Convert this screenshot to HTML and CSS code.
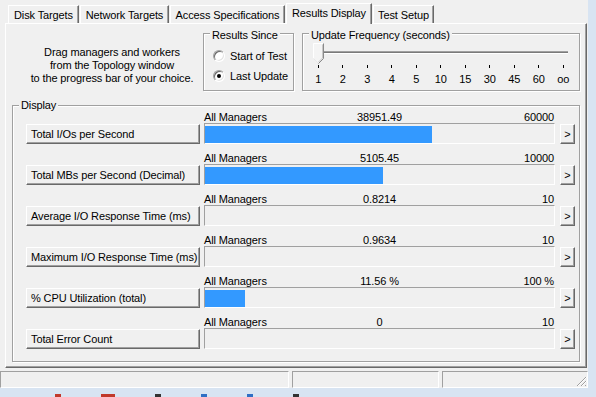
FILE: index.html
```html
<!DOCTYPE html>
<html lang="en">
    <head>
        <meta charset="UTF-8">
        <meta name="viewport" content="width=device-width, initial-scale=1.0">
        <title>Iometer - Results Display</title>
        <link rel="stylesheet" href="styles.css">
    </head>
    <body>
        <div class="window">
            <div class="tabs">
                <div class="tab tab-disk">Disk Targets</div>
                <div class="tab tab-net">Network Targets</div>
                <div class="tab tab-access">Access Specifications</div>
                <div class="tab tab-results active">Results Display</div>
                <div class="tab tab-setup">Test Setup</div>
            </div>

            <div class="panel">
                <div class="top-row">
                    <p class="hint">Drag managers and workers<br>from the Topology window<br>to the progress bar of your choice.</p>

                    <div class="group since">
                        <div class="group-title">Results Since</div>
                        <div class="radios">
                            <div class="radio-row"><span class="radio"></span>Start of Test</div>
                            <div class="radio-row"><span class="radio checked"></span>Last Update</div>
                        </div>
                    </div>

                    <div class="group freq">
                        <div class="group-title">Update Frequency (seconds)</div>
                        <div class="slider">
                            <div class="track"></div>
                            <svg class="thumb" width="11" height="21" viewBox="0 0 11 21">
                                <path d="M0.5 0.5 H10.5 V15.5 L5.5 20.5 L0.5 15.5 Z" fill="#f4f4f4"/>
                                <path d="M0.5 15.5 V0.5 H10" fill="none" stroke="#fff"/>
                                <path d="M0.5 15.5 L5.5 20.5" fill="none" stroke="#e8e8e8"/>
                                <path d="M10.5 0.5 V15.5 L5.5 20.5" fill="none" stroke="#8a8a8a"/>
                                <path d="M9.5 1.5 V15 L5.5 19" fill="none" stroke="#c8c8c8"/>
                            </svg>
                        </div>
                        <div class="ticks">
                            <div class="tick"><span class="mark"></span>1</div>
                            <div class="tick"><span class="mark"></span>2</div>
                            <div class="tick"><span class="mark"></span>3</div>
                            <div class="tick"><span class="mark"></span>4</div>
                            <div class="tick"><span class="mark"></span>5</div>
                            <div class="tick"><span class="mark"></span>10</div>
                            <div class="tick"><span class="mark"></span>15</div>
                            <div class="tick"><span class="mark"></span>30</div>
                            <div class="tick"><span class="mark"></span>45</div>
                            <div class="tick"><span class="mark"></span>60</div>
                            <div class="tick"><span class="mark"></span>oo</div>
                        </div>
                    </div>
                </div>

                <div class="group display">
                    <div class="group-title">Display</div>
                    <div class="rows">
                        <div class="row">
                            <div class="values"><span>All Managers</span><span>38951.49</span><span class="max">60000</span></div>
                            <button class="stat">Total I/Os per Second</button>
                            <div class="bar"><div class="fill" style="width: 64.92%"></div></div>
                            <button class="more">&gt;</button>
                        </div>
                        <div class="row">
                            <div class="values"><span>All Managers</span><span>5105.45</span><span class="max">10000</span></div>
                            <button class="stat">Total MBs per Second (Decimal)</button>
                            <div class="bar"><div class="fill" style="width: 51.05%"></div></div>
                            <button class="more">&gt;</button>
                        </div>
                        <div class="row">
                            <div class="values"><span>All Managers</span><span>0.8214</span><span class="max">10</span></div>
                            <button class="stat">Average I/O Response Time (ms)</button>
                            <div class="bar"><div class="fill" style="width: 0%"></div></div>
                            <button class="more">&gt;</button>
                        </div>
                        <div class="row">
                            <div class="values"><span>All Managers</span><span>0.9634</span><span class="max">10</span></div>
                            <button class="stat">Maximum I/O Response Time (ms)</button>
                            <div class="bar"><div class="fill" style="width: 0%"></div></div>
                            <button class="more">&gt;</button>
                        </div>
                        <div class="row">
                            <div class="values"><span>All Managers</span><span>11.56 %</span><span class="max">100 %</span></div>
                            <button class="stat">% CPU Utilization (total)</button>
                            <div class="bar"><div class="fill" style="width: 11.56%"></div></div>
                            <button class="more">&gt;</button>
                        </div>
                        <div class="row">
                            <div class="values"><span>All Managers</span><span>0</span><span class="max">10</span></div>
                            <button class="stat">Total Error Count</button>
                            <div class="bar"><div class="fill" style="width: 0%"></div></div>
                            <button class="more">&gt;</button>
                        </div>
                    </div>
                </div>
            </div>

            <div class="statusbar">
                <div class="cell cell-1"></div>
                <div class="cell cell-2"></div>
                <div class="cell cell-3">
                    <svg class="grip" width="11" height="11" viewBox="0 0 11 11">
                        <path d="M10 1 L1 10 M10 5 L5 10 M10 9 L9 10" stroke="#a0a0a0" fill="none"/>
                        <path d="M11 1 L2 10 M11 5 L6 10" stroke="#fff" fill="none"/>
                    </svg>
                </div>
            </div>
        </div>

        <div class="taskbar">
            <span class="bit bit-red"></span>
            <span class="bit bit-red wide"></span>
            <span class="bit bit-dark"></span>
            <span class="bit bit-blue"></span>
            <span class="bit bit-blue"></span>
            <span class="bit bit-dark"></span>
        </div>
    </body>
</html>
```

FILE: styles.css
```css
*{
    margin: 0;
    padding: 0;
    box-sizing: border-box;
}

body{
    width: 596px;
    height: 397px;
    overflow: hidden;
    background-color: #d8e4f2;
    font-family: "Liberation Sans", Arial, sans-serif;
    font-size: 11px;
    letter-spacing: -0.12px;
    color: #000;
}

.window{
    display: flex;
    flex-direction: column;
    width: 588px;
    height: 388px;
    background-color: #f0f0f0;
}

/* tab strip */
.tabs{
    display: flex;
    align-items: flex-end;
    gap: 1px;
    height: 23px;
    padding-left: 8px;
}

.tab{
    height: 18px;
    padding-top: 3px;
    line-height: 13px;
    text-align: center;
    white-space: nowrap;
    background-color: #f0f0f0;
    border-top: 1px solid #fff;
    border-left: 1px solid #fff;
    border-right: 1px solid #696969;
    box-shadow: inset -1px 0 0 #a0a0a0;
}
.tab-disk{ width: 71px; }
.tab-net{ width: 89px; }
.tab-access{ width: 115px; }
.tab-results{ width: 86px; }
.tab-setup{ width: 61px; }

.tab.active{
    position: relative;
    z-index: 1;
    height: 21px;
    margin-bottom: -1px;
}

.panel{
    margin-left: 5px;
    width: 582px;
    height: 345px;
    border-top: 1px solid #fff;
    border-left: 1px solid #fff;
    border-right: 1px solid #696969;
    border-bottom: 1px solid #696969;
    box-shadow: inset -1px -1px 0 #a0a0a0;
}

/* group boxes */
.group{
    border: 1px solid #a0a0a0;
    box-shadow: inset 1px 1px 0 #fff, 1px 1px 0 #fff;
}

.group-title{
    width: fit-content;
    margin: -5px 0 0 6px;
    padding: 0 2px;
    line-height: 13px;
    background-color: #f0f0f0;
}

.top-row{
    display: flex;
    padding-top: 9px;
}

.hint{
    width: 176px;
    margin: 13px 3px 0 18px;
    line-height: 13px;
    text-align: center;
}

.since{
    width: 91px;
    height: 58px;
    margin-right: 8px;
}

.radios{
    padding: 4px 0 0 9px;
}

.radio-row{
    display: flex;
    align-items: center;
    height: 20px;
}

.radio{
    display: flex;
    align-items: center;
    justify-content: center;
    width: 12px;
    height: 12px;
    margin-right: 5px;
    border-radius: 50%;
    background-color: #fff;
    border: 1px solid;
    border-color: #a0a0a0 #fff #fff #a0a0a0;
    box-shadow: inset 1px 1px 0 #696969, inset -1px -1px 0 #e3e3e3;
}
.radio.checked::after{
    content: "";
    width: 4px;
    height: 4px;
    border-radius: 50%;
    background-color: #000;
}

.freq{
    width: 278px;
    height: 58px;
}

.slider{
    display: grid;
    width: 256px;
    height: 21px;
    margin: 1px 0 0 10px;
}
.slider > *{
    grid-area: 1 / 1;
}

.track{
    align-self: start;
    width: 250px;
    height: 3px;
    margin: 8px 0 0 5px;
    background-color: #7a7a7a;
    border-top: 1px solid #a0a0a0;
    border-bottom: 1px solid #fff;
}

.thumb{
    display: block;
}

.ticks{
    display: grid;
    grid-template-columns: repeat(11, 24.5px);
    margin: 1px 0 0 3px;
}

.tick{
    display: flex;
    flex-direction: column;
    align-items: center;
    line-height: 13px;
}

.mark{
    width: 1px;
    height: 3px;
    margin-bottom: 5px;
    background-color: #000;
}

/* display group */
.display{
    width: 568px;
    height: 257px;
    margin: 14px 0 0 6px;
}
.display .group-title{
    margin-top: -7px;
    line-height: 12px;
}

.rows{
    display: flex;
    flex-direction: column;
    gap: 8px;
    padding-left: 13px;
}

.row{
    display: grid;
    grid-template-columns: 174px 351px 16px;
    grid-template-rows: 12px 21px;
    column-gap: 4px;
}

.values{
    grid-column: 2;
    grid-row: 1;
    display: grid;
    grid-template-columns: 1fr auto 1fr;
    line-height: 12px;
    white-space: nowrap;
}
.values .max{
    text-align: right;
    padding-right: 1px;
}

.stat, .more{
    height: 20px;
    align-self: end;
    font: inherit;
    letter-spacing: inherit;
    color: #000;
    white-space: nowrap;
    background-color: #f0f0f0;
    border: 1px solid;
    border-color: #fff #696969 #696969 #fff;
    box-shadow: inset -1px -1px 0 #a0a0a0;
}

.stat{
    grid-column: 1;
    grid-row: 2;
    padding-left: 4px;
    text-align: left;
    overflow: hidden;
}

.more{
    grid-column: 3;
    grid-row: 2;
    justify-self: end;
    width: 15px;
}

.bar{
    grid-column: 2;
    grid-row: 2;
    height: 21px;
    padding-top: 2px;
    border-top: 1px solid #a0a0a0;
    border-left: 1px solid #a0a0a0;
    border-right: 1px solid #fff;
    border-bottom: 1px solid #fff;
}

.fill{
    height: 17px;
    background-color: #3399ff;
}

/* status bar */
.statusbar{
    display: flex;
    gap: 3px;
    height: 17px;
    margin-top: 3px;
}

.cell{
    border-top: 1px solid #a0a0a0;
    border-left: 1px solid #a0a0a0;
    border-right: 1px solid #fff;
    border-bottom: 1px solid #fff;
}
.cell-1{ width: 289px; }
.cell-2{ width: 147px; }
.cell-3{
    flex: 1;
    display: flex;
    justify-content: flex-end;
    align-items: flex-end;
}

.grip{
    display: block;
}

.taskbar{
    display: flex;
    align-items: flex-end;
    gap: 40px;
    height: 9px;
    padding-left: 55px;
}

.bit{
    width: 6px;
    height: 3px;
}
.bit.wide{ width: 14px; }
.bit-red{ background-color: #c0392b; }
.bit-dark{ background-color: #333; }
.bit-blue{ background-color: #2f6fc4; }
```
